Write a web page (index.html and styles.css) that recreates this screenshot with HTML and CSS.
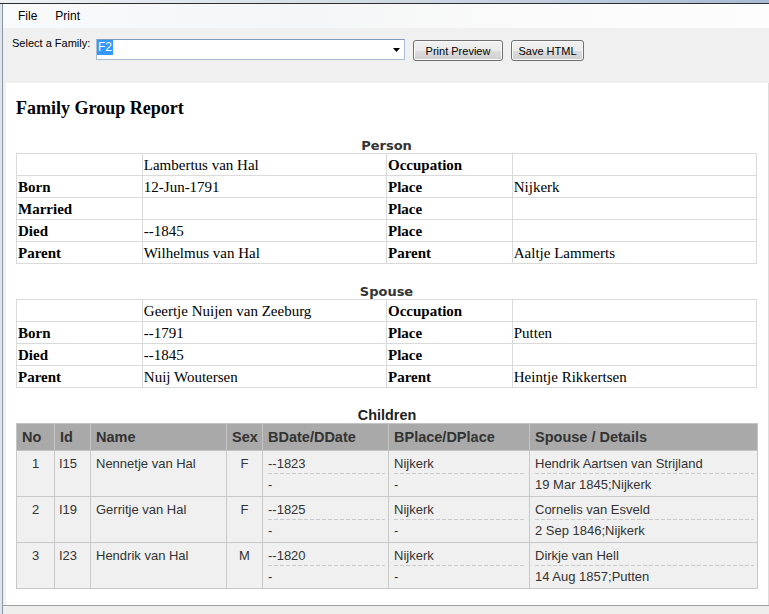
FILE: index.html
```html
<!DOCTYPE html>
<html>
<head>
<meta charset="utf-8">
<title>Family Group Report</title>
<link rel="stylesheet" href="styles.css">
</head>
<body>
<div class="app">
  <div class="frame-top"></div>
  <div class="main">
    <div class="menubar">
      <span class="menu-item">File</span>
      <span class="menu-item">Print</span>
    </div>
    <div class="toolbar">
      <span class="label">Select a Family:</span>
      <div class="combo">
        <span class="selected">F2</span>
        <svg class="arrow" width="7" height="4" viewBox="0 0 7 4"><path d="M0 0H7L3.5 4Z" fill="#000"/></svg>
      </div>
      <button class="btn btn-preview">Print Preview</button>
      <button class="btn btn-save">Save HTML</button>
    </div>
    <div class="browser">
      <h1 class="title">Family Group Report</h1>

      <table class="info">
        <caption class="cap-info">Person</caption>
        <colgroup><col class="c-lab"><col class="c-val"><col class="c-lab"><col class="c-val"></colgroup>
        <tr><td class="lab"></td><td>Lambertus van Hal</td><td class="lab">Occupation</td><td></td></tr>
        <tr><td class="lab">Born</td><td>12-Jun-1791</td><td class="lab">Place</td><td>Nijkerk</td></tr>
        <tr><td class="lab">Married</td><td></td><td class="lab">Place</td><td></td></tr>
        <tr><td class="lab">Died</td><td>--1845</td><td class="lab">Place</td><td></td></tr>
        <tr><td class="lab">Parent</td><td>Wilhelmus van Hal</td><td class="lab">Parent</td><td>Aaltje Lammerts</td></tr>
      </table>

      <table class="info spouse">
        <caption class="cap-info">Spouse</caption>
        <colgroup><col class="c-lab"><col class="c-val"><col class="c-lab"><col class="c-val"></colgroup>
        <tr><td class="lab"></td><td>Geertje Nuijen van Zeeburg</td><td class="lab">Occupation</td><td></td></tr>
        <tr><td class="lab">Born</td><td>--1791</td><td class="lab">Place</td><td>Putten</td></tr>
        <tr><td class="lab">Died</td><td>--1845</td><td class="lab">Place</td><td></td></tr>
        <tr><td class="lab">Parent</td><td>Nuij Woutersen</td><td class="lab">Parent</td><td>Heintje Rikkertsen</td></tr>
      </table>

      <table class="children">
        <caption class="cap-children">Children</caption>
        <colgroup>
          <col class="k-no"><col class="k-id"><col class="k-name"><col class="k-sex"><col class="k-date"><col class="k-place"><col class="k-spouse">
        </colgroup>
        <thead>
          <tr><th>No</th><th>Id</th><th>Name</th><th class="center">Sex</th><th>BDate/DDate</th><th>BPlace/DPlace</th><th>Spouse / Details</th></tr>
        </thead>
        <tbody>
          <tr>
            <td class="center">1</td><td class="id">I15</td><td>Nennetje van Hal</td><td class="center">F</td>
            <td class="split"><div class="l1">--1823</div><div class="l2">-</div></td>
            <td class="split"><div class="l1">Nijkerk</div><div class="l2">-</div></td>
            <td class="split"><div class="l1">Hendrik Aartsen van Strijland</div><div class="l2">19 Mar 1845;Nijkerk</div></td>
          </tr>
          <tr>
            <td class="center">2</td><td class="id">I19</td><td>Gerritje van Hal</td><td class="center">F</td>
            <td class="split"><div class="l1">--1825</div><div class="l2">-</div></td>
            <td class="split"><div class="l1">Nijkerk</div><div class="l2">-</div></td>
            <td class="split"><div class="l1">Cornelis van Esveld</div><div class="l2">2 Sep 1846;Nijkerk</div></td>
          </tr>
          <tr>
            <td class="center">3</td><td class="id">I23</td><td>Hendrik van Hal</td><td class="center">M</td>
            <td class="split"><div class="l1">--1820</div><div class="l2">-</div></td>
            <td class="split"><div class="l1">Nijkerk</div><div class="l2">-</div></td>
            <td class="split"><div class="l1">Dirkje van Hell</div><div class="l2">14 Aug 1857;Putten</div></td>
          </tr>
        </tbody>
      </table>
    </div>
    <div class="status"></div>
  </div>
</div>
</body>
</html>
```

FILE: styles.css
```css
* { box-sizing: border-box; }
html, body { margin: 0; padding: 0; }
body {
  width: 769px;
  height: 614px;
  overflow: hidden;
  background: #dfe5ec;
  font-family: "Liberation Sans", Arial, sans-serif;
}
.app {
  width: 769px;
  height: 614px;
  display: flex;
  flex-direction: column;
}
.frame-top {
  flex: none;
  height: 4px;
  background: linear-gradient(to right, #eef1f4 0%, #cdd8e5 55%, #a8bbd3 100%);
  border-bottom: 1px solid #2e2e2e;
}
.main {
  flex: 1;
  min-height: 0;
  display: flex;
  flex-direction: column;
  margin-left: 2px;
  border-left: 1px solid #8d98a4;
  background: #f0f0f0;
}
.menubar {
  flex: none;
  height: 24px;
  display: flex;
  align-items: center;
  padding-left: 15px;
  background: linear-gradient(to right, #f9fafb 0%, #f5f6f7 40%, #fbfbfb 70%, #fdfdfd 100%);
  font-size: 12px;
  color: #000;
}
.menu-item { margin-right: 18px; line-height: 24px; }
.toolbar {
  flex: none;
  height: 55px;
  display: flex;
  align-items: flex-start;
  padding-left: 9px;
  background: #f0f0f0;
}
.label {
  width: 84px;
  margin-top: 9px;
  font-size: 11px;
  line-height: 13px;
  color: #000;
}
.combo {
  width: 309px;
  height: 21px;
  margin-top: 11px;
  display: flex;
  align-items: flex-start;
  padding: 0;
  background: #fff;
  border: 1px solid #a9bdd2;
  border-top-color: #7f9dbd;
}
.selected {
  background: #3399ff;
  color: #fff;
  font-size: 12px;
  line-height: 15px;
  padding: 0 1px;
}
.arrow { margin-left: auto; margin-top: 8px; margin-right: 4px; }
.btn {
  margin-top: 12px;
  margin-left: 8px;
  height: 21px;
  padding: 0;
  font-family: "Liberation Sans", Arial, sans-serif;
  font-size: 11px;
  color: #000;
  border: 1px solid #707070;
  border-radius: 3px;
  background: linear-gradient(#f2f2f2 0%, #ebebeb 50%, #dddddd 50%, #cfcfcf 100%);
  box-shadow: inset 0 0 0 1px #fbfbfb;
}
.btn-preview { width: 90px; }
.btn-save { width: 73px; }

.browser {
  flex: 1;
  min-height: 0;
  overflow: hidden;
  margin-left: 3px;
  background: #fff;
  border-right: 1px solid #dcdcdc;
  padding: 0 11px 0 10px;
}
.status {
  flex: none;
  height: 9px;
  border-top: 1px solid #a0a0a0;
  background: #f0eded;
}
.title {
  margin: 15px 0 19px;
  font-family: "Liberation Serif", "Times New Roman", serif;
  font-size: 18px;
  line-height: 21px;
  font-weight: bold;
  color: #000;
}
table { border-collapse: collapse; table-layout: fixed; width: 100%; }
.info { margin-bottom: 20px; }
.info.spouse { margin-bottom: 19px; }
.cap-info {
  font-family: "DejaVu Sans", Verdana, sans-serif;
  font-weight: bold;
  font-size: 13px;
  line-height: 15px;
  color: #333;
  text-align: center;
}
.c-lab { width: 17%; }
.c-val { width: 33%; }
.info td {
  border: 1px solid #dadada;
  padding: 1px 1px 0;
  height: 22px;
  line-height: 20px;
  font-family: "Liberation Serif", "Times New Roman", serif;
  font-size: 15px;
  color: #000;
  white-space: nowrap;
  overflow: hidden;
}
.info td.lab { font-weight: bold; }

.cap-children {
  font-family: "Liberation Sans", Arial, sans-serif;
  font-weight: bold;
  font-size: 14.4px;
  line-height: 16px;
  color: #1e1e1e;
  text-align: center;
}
.k-no { width: 38px; }
.k-id { width: 36px; }
.k-name { width: 136px; }
.k-sex { width: 36px; }
.k-date { width: 126px; }
.k-place { width: 141px; }
.k-spouse { width: 228px; }
.children th {
  background: #a9a9a9;
  border: 1px solid #c4c4c4;
  height: 27px;
  line-height: 26px;
  padding: 0 5px;
  text-align: left;
  font-size: 14.5px;
  font-weight: bold;
  color: #333;
  white-space: nowrap;
}
.children td {
  background: #f0f0f0;
  border: 1px solid #c8c8c8;
  padding: 5px 5px 3px;
  vertical-align: top;
  font-size: 13px;
  line-height: 16px;
  color: #333;
  white-space: nowrap;
}
.children .center { text-align: center; }
.children td.id { padding-left: 4px; }
.children td.split { padding-right: 3px; }
.l1 {
  padding-bottom: 2px;
  background: repeating-linear-gradient(90deg, #c9c9c9 0 4px, transparent 4px 6px) left bottom / 100% 1px no-repeat;
}
.l2 { padding-top: 3px; }
```
